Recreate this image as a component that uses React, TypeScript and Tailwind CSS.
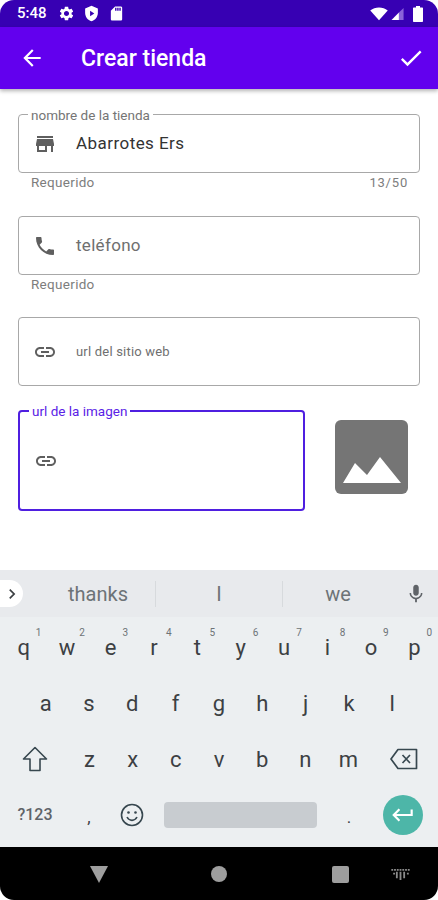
import type { ReactNode } from 'react';

const Icon = ({ d, className }: { d: string; className: string }) => (
  <svg viewBox="0 0 24 24" className={className} fill="currentColor">
    <path d={d} />
  </svg>
);

const icons = {
  store: 'M20 4H4v2h16V4zm1 10v-2l-1-5H4l-1 5v2h1v6h10v-6h4v6h2v-6h1zm-9 4H6v-4h6v4z',
  phone:
    'M6.62 10.79c1.44 2.83 3.76 5.14 6.59 6.59l2.2-2.2c.27-.27.67-.36 1.02-.24 1.12.37 2.33.57 3.57.57.55 0 1 .45 1 1V20c0 .55-.45 1-1 1-9.39 0-17-7.61-17-17 0-.55.45-1 1-1h3.5c.55 0 1 .45 1 1 0 1.25.2 2.45.57 3.57.11.35.03.74-.25 1.02l-2.2 2.2z',
  link: 'M3.9 12c0-1.71 1.39-3.1 3.1-3.1h4V7H7c-2.76 0-5 2.24-5 5s2.24 5 5 5h4v-1.9H7c-1.71 0-3.1-1.39-3.1-3.1zM8 13h8v-2H8v2zm9-6h-4v1.9h4c1.71 0 3.1 1.39 3.1 3.1s-1.39 3.1-3.1 3.1h-4V17h4c2.76 0 5-2.24 5-5s-2.24-5-5-5z',
  back: 'M20 11H7.83l5.59-5.59L12 4l-8 8 8 8 1.41-1.41L7.83 13H20v-2z',
  check: 'M9 16.17L4.83 12l-1.42 1.41L9 19 21 7l-1.41-1.41z',
  settings:
    'M19.14 12.94c.04-.3.06-.61.06-.94 0-.32-.02-.64-.07-.94l2.03-1.58c.18-.14.23-.41.12-.61l-1.92-3.32c-.12-.22-.37-.29-.59-.22l-2.39.96c-.5-.38-1.03-.7-1.62-.94l-.36-2.54c-.04-.24-.24-.41-.48-.41h-3.84c-.24 0-.43.17-.47.41l-.36 2.54c-.59.24-1.13.57-1.62.94l-2.39-.96c-.22-.08-.47 0-.59.22L2.74 8.87c-.12.21-.08.47.12.61l2.03 1.58c-.05.3-.09.63-.09.94s.02.64.07.94l-2.03 1.58c-.18.14-.23.41-.12.61l1.92 3.32c.12.22.37.29.59.22l2.39-.96c.5.38 1.03.7 1.62.94l.36 2.54c.05.24.24.41.48.41h3.84c.24 0 .44-.17.47-.41l.36-2.54c.59-.24 1.13-.56 1.62-.94l2.39.96c.22.08.47 0 .59-.22l1.92-3.32c.12-.22.07-.47-.12-.61l-2.01-1.58zM12 15.6c-1.98 0-3.6-1.62-3.6-3.6s1.62-3.6 3.6-3.6 3.6 1.62 3.6 3.6-1.62 3.6-3.6 3.6z',
  shield: 'M12 1L3 5v6c0 5.55 3.84 10.74 9 12 5.16-1.26 9-6.45 9-12V5l-9-4zm-2 15V8l6 4-6 4z',
  sd: 'M18 2h-8L4.02 8 4 20c0 1.1.9 2 2 2h12c1.1 0 2-.9 2-2V4c0-1.1-.9-2-2-2zm-6 6h-2V4h2v4zm3 0h-2V4h2v4zm3 0h-2V4h2v4z',
  mic: 'M12 14c1.66 0 2.99-1.34 2.99-3L15 5c0-1.66-1.34-3-3-3S9 3.34 9 5v6c0 1.66 1.34 3 3 3zm5.3-3c0 3-2.54 5.1-5.3 5.1S6.7 14 6.7 11H5c0 3.41 2.72 6.23 6 6.72V21h2v-3.28c3.28-.48 6-3.3 6-6.72h-1.7z',
  enter: 'M19 7v4H5.83l3.58-3.59L8 6l-6 6 6 6 1.41-1.41L5.83 13H21V7z',
  chevron: 'M8.59 16.59L13.17 12 8.59 7.41 10 6l6 6-6 6z',
};

function Field({
  icon,
  label,
  focused,
  className,
  children,
}: {
  icon: string;
  label?: string;
  focused?: boolean;
  className: string;
  children?: ReactNode;
}) {
  return (
    <div
      className={`relative flex items-center rounded-[4px] ${
        focused ? 'border-2 border-[#4f1fe0]' : 'border border-[#a8a8a8]'
      } ${className}`}
    >
      {label && (
        <span
          className={`absolute left-[9px] bg-white px-[3px] text-[13.5px] leading-[12px] ${
            focused ? 'top-[-7px] text-[#5a22e6]' : 'top-[-6px] text-[#757575]'
          }`}
        >
          {label}
        </span>
      )}
      <Icon d={icon} className="ml-[14px] h-6 w-6 shrink-0 text-[#5f5f5f]" />
      {children}
    </div>
  );
}

const Helper = ({ right }: { right?: string }) => (
  <div className="mt-[2px] flex h-[15px] justify-between pl-[13px] pr-[12px] text-[13.5px] leading-[15px] tracking-[0.3px] text-[#7d7d7d]">
    <span>Requerido</span>
    {right && <span className="text-[13px] tracking-[0.8px]">{right}</span>}
  </div>
);

const rowOne = [
  ['q', '1'],
  ['w', '2'],
  ['e', '3'],
  ['r', '4'],
  ['t', '5'],
  ['y', '6'],
  ['u', '7'],
  ['i', '8'],
  ['o', '9'],
  ['p', '0'],
];

export default function App() {
  return (
    <div className="h-[900px] w-[438px] overflow-hidden bg-white font-['Roboto',sans-serif]">
      <div className="flex h-full flex-col overflow-hidden rounded-[14px]">
        {/* barra de estado */}
        <div className="flex h-[27px] items-center justify-between bg-[#3700b3] pl-[17px] pr-[15px] text-white">
          <div className="flex items-center">
            <span className="text-[15px] font-medium">5:48</span>
            <Icon d={icons.settings} className="ml-[11px] h-[17px] w-[17px]" />
            <Icon d={icons.shield} className="ml-[8px] h-[17px] w-[17px]" />
            <Icon d={icons.sd} className="ml-[8px] h-[17px] w-[17px]" />
          </div>
          <div className="flex items-center gap-[3px]">
            <svg viewBox="0 0 20 16" className="h-[14px] w-[18px]" fill="currentColor">
              <path d="M10 15L0 4c5.5-4.7 14.5-4.7 20 0z" />
            </svg>
            <svg viewBox="0 0 14 14" className="h-[13px] w-[14px]">
              <path d="M0 14L8 6v8z" fill="#ffffff" />
              <path d="M8 6l5-5v13H8z" fill="#8a63d9" />
            </svg>
            <svg viewBox="0 0 10 16" className="ml-[5px] h-[16px] w-[10px]" fill="currentColor">
              <path d="M3 0h4v1.5h2c.6 0 1 .4 1 1V15c0 .6-.4 1-1 1H1c-.6 0-1-.4-1-1V2.500c0-.6.4-1 1-1h2z" />
            </svg>
          </div>
        </div>

        {/* barra de la app */}
        <div className="z-10 flex h-[62px] items-center bg-[#6200ee] pl-[19px] pr-[13px] text-white shadow-[0_2px_4px_rgba(0,0,0,0.3)]">
          <Icon d={icons.back} className="h-[26px] w-[26px]" />
          <span className="ml-[36px] flex-1 pt-[3px] text-[23px] font-medium">Crear tienda</span>
          <Icon d={icons.check} className="h-[28px] w-[28px]" />
        </div>

        {/* formulario */}
        <div className="flex-1 bg-white pl-[18px] pr-[18px] pt-[25px]">
          <Field icon={icons.store} label="nombre de la tienda" className="h-[59px]">
            <span className="ml-[19px] pt-[1px] text-[17px] tracking-[0.45px] text-[#333333]">Abarrotes Ers</span>
          </Field>
          <Helper right="13/50" />

          <Field icon={icons.phone} className="mt-[26px] h-[59px]">
            <span className="ml-[19px] text-[17px] tracking-[0.3px] text-[#6f6f6f]">teléfono</span>
          </Field>
          <Helper />

          <Field icon={icons.link} className="mt-[25px] h-[69px]">
            <span className="ml-[19px] text-[13px] tracking-[0.2px] text-[#6f6f6f]">url del sitio web</span>
          </Field>

          <div className="mt-[24px] flex items-start">
            <Field icon={icons.link} label="url de la imagen" focused className="h-[101px] w-[287px]" />
            <div className="ml-[30px] mt-[10px] flex h-[74px] w-[73px] items-end justify-center rounded-[6px] bg-[#757575] pb-[11px]">
              <svg viewBox="0 0 58 26" className="h-[26px] w-[58px]" fill="#ffffff">
                <path d="M0 26L12 6l12 12L37 0l21 26z" />
              </svg>
            </div>
          </div>
        </div>

        {/* sugerencias */}
        <div className="flex h-[47px] items-center bg-[#e8eaed] text-[20px] text-[#6d7377]">
          <div className="flex h-[27px] w-[23px] items-center justify-center rounded-r-full bg-white">
            <Icon d={icons.chevron} className="h-[20px] w-[20px] text-[#3c4043]" />
          </div>
          <span className="w-[132px] pl-[18px] text-center">thanks</span>
          <div className="h-[26px] w-px bg-[#d7dadd]" />
          <span className="w-[126px] text-center">I</span>
          <div className="h-[26px] w-px bg-[#d7dadd]" />
          <span className="w-[110px] text-center">we</span>
          <Icon d={icons.mic} className="ml-[12px] h-[22px] w-[22px] text-[#5f6368]" />
        </div>

        {/* teclado */}
        <div className="flex h-[230px] flex-col bg-[#eceff1] pb-[4px] pt-[2px] text-[22px] text-[#3c4043]">
          <div className="flex h-[56px] px-[2px]">
            {rowOne.map(([k, n]) => (
              <div key={k} className="relative flex flex-1 items-center justify-center">
                <span>{k}</span>
                <span className="absolute right-[4px] top-[8px] text-[10px] leading-[12px] text-[#6d7377]">{n}</span>
              </div>
            ))}
          </div>
          <div className="flex h-[56px] px-[24px]">
            {['a', 's', 'd', 'f', 'g', 'h', 'j', 'k', 'l'].map((k) => (
              <div key={k} className="flex flex-1 items-center justify-center">
                {k}
              </div>
            ))}
          </div>
          <div className="flex h-[56px] items-center">
            <div className="flex w-[68px] justify-center pl-[2px]">
              <svg viewBox="0 0 26 26" className="h-[26px] w-[26px] text-[#37474f]" fill="none" stroke="currentColor" strokeWidth="1.600" strokeLinejoin="round">
                <path d="M13 1.500L1.500 13H8v11.500h10V13h6.500z" />
              </svg>
            </div>
            <div className="flex flex-1">
              {['z', 'x', 'c', 'v', 'b', 'n', 'm'].map((k) => (
                <div key={k} className="flex flex-1 items-center justify-center">
                  {k}
                </div>
              ))}
            </div>
            <div className="flex w-[68px] justify-center">
              <svg viewBox="0 0 28 22" className="h-[22px] w-[28px] text-[#37474f]" fill="none" stroke="currentColor" strokeWidth="1.700" strokeLinejoin="round">
                <path d="M8 1.500h18.500v19H8L1 11z" />
                <path d="M12.500 7l7.500 8M20 7l-7.500 8" />
              </svg>
            </div>
          </div>
          <div className="flex h-[56px] items-center">
            <div className="flex w-[70px] justify-center text-[16px] font-medium text-[#5f6368]">?123</div>
            <div className="flex w-[38px] justify-center pt-[6px] text-[17px]">,</div>
            <div className="flex w-[48px] justify-center">
              <svg viewBox="0 0 24 24" className="h-[24px] w-[24px] text-[#37474f]" fill="none" stroke="currentColor" strokeWidth="1.600">
                <circle cx="12" cy="12" r="10.500" />
                <path d="M7 14c1.200 2.300 3 3.400 5 3.400s3.800-1.100 5-3.400" />
                <circle cx="8.500" cy="9.500" r="1.300" fill="currentColor" stroke="none" />
                <circle cx="15.500" cy="9.500" r="1.300" fill="currentColor" stroke="none" />
              </svg>
            </div>
            <div className="ml-[8px] h-[26px] w-[153px] rounded-[4px] bg-[#c8ccd0]" />
            <div className="flex w-[64px] justify-center pt-[6px] text-[17px]">.</div>
            <div className="ml-[2px] flex h-[40px] w-[40px] items-center justify-center rounded-full bg-[#4db6a8]">
              <Icon d={icons.enter} className="h-[26px] w-[26px] text-white" />
            </div>
          </div>
        </div>

        {/* navegación */}
        <div className="flex h-[53px] items-start bg-black pt-[19px]">
          <svg viewBox="0 0 18 17" className="ml-[90px] h-[17px] w-[18px]" fill="#9e9e9e">
            <path d="M0 0h18L9 17z" />
          </svg>
          <div className="ml-[103px] h-[16px] w-[16px] rounded-full bg-[#9e9e9e]" />
          <div className="ml-[105px] h-[17px] w-[17px] rounded-[2px] bg-[#9e9e9e]" />
          <svg viewBox="0 0 20 12" className="ml-[42px] mt-[3px] h-[11px] w-[19px]" fill="#8a8a8a">
            <path d="M0 0h2v2H0zM3 0h2v2H3zM6 0h2v2H6zM9 0h2v2H9zM12 0h2v2h-2zM15 0h2v2h-2zM18 0h2v2h-2zM2 4h2v2H2zM5 3h2v7H5zM9 3h2v9H9zM13 3h2v7h-2zM17 4h2v2h-2z" />
          </svg>
        </div>
      </div>
    </div>
  );
}
